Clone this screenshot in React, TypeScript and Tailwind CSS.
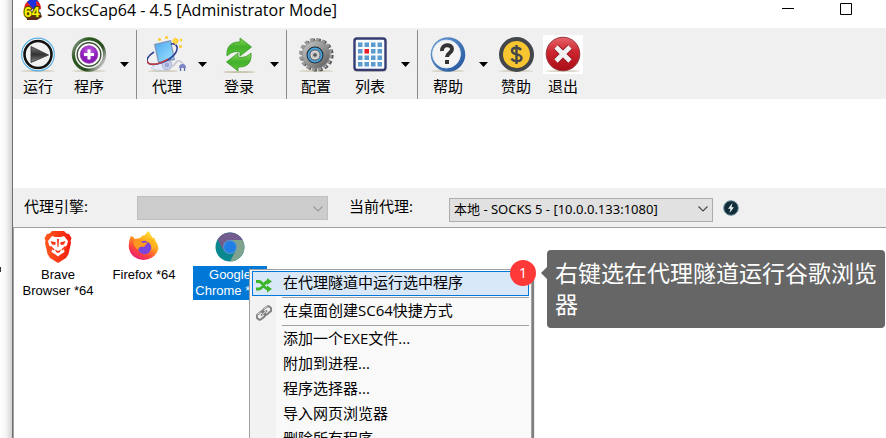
import type { ReactNode } from "react";

const cjk = "font-['Open_Sans','Noto_Sans_CJK_SC',sans-serif]";

function AppLogo() {
  return (
    <svg width="22" height="22" viewBox="0 0 22 22" aria-hidden="true">
      <path d="M5 2Q11-3 16 1L18 8 11 9Z" fill="#2030e0" stroke="#15157a" strokeWidth=".6" />
      <path d="M5 2Q1 6 3 10L11 9Z" fill="#e81c24" />
      <path d="M14 1q5 1 5 8l-4 1Z" fill="#f02020" />
      <path d="M3 12h15l2 5-5 3H5Z" fill="#5b2a1b" />
      <text x="2" y="17" fontSize="14" fontWeight="700" fontFamily="Liberation Sans, sans-serif" fill="#fff200" stroke="#4d4a00" strokeWidth="2" paintOrder="stroke">64</text>
    </svg>
  );
}

function Shadow() {
  return <ellipse cx="20" cy="37" rx="17" ry="1" fill="#c9c4ae" opacity=".7" />;
}

function Icon({ children }: { children: ReactNode }) {
  return (
    <svg width="40" height="40" viewBox="0 0 40 40" aria-hidden="true" className="shrink-0">
      {children}
    </svg>
  );
}

function RunIcon() {
  return (
    <Icon>
      <defs><linearGradient id="run" x1="0" y1="0" x2="0" y2="1"><stop stopColor="#777" /><stop offset=".5" stopColor="#333" /><stop offset="1" stopColor="#888" /></linearGradient></defs>
      <Shadow />
      <circle cx="20" cy="20.5" r="16.3" fill="#fff" stroke="#5ab0e2" strokeWidth="1.2" />
      <circle cx="20" cy="20.5" r="13.5" fill="#f1f1f1" stroke="#111" strokeWidth="2.6" />
      <path d="M13 12.500 30.500 21 13 28.500Z" fill="url(#run)" stroke="#333" strokeWidth=".8" />
    </Icon>
  );
}

function ProgramIcon() {
  return (
    <Icon>
      <defs>
        <linearGradient id="ring" x1="0" y1="0" x2="1" y2=".7"><stop stopColor="#aaa" /><stop offset=".3" stopColor="#2b5a20" /><stop offset=".75" stopColor="#2a4d20" /><stop offset="1" stopColor="#bbb" /></linearGradient>
        <radialGradient id="plus" cy=".3"><stop stopColor="#c45fe4" /><stop offset="1" stopColor="#8a1ab6" /></radialGradient>
      </defs>
      <Shadow />
      <circle cx="20" cy="20.5" r="15.6" fill="#f5f5f5" stroke="url(#ring)" strokeWidth="3.2" />
      <circle cx="20" cy="20.5" r="11.8" fill="#fff" stroke="#3b5034" strokeWidth="1.4" />
      <circle cx="20" cy="20.5" r="8.8" fill="url(#plus)" stroke="#8f3cad" strokeWidth=".8" />
      <path d="M20 15.500v10M15 20.500h10" stroke="#fff" strokeWidth="3" />
    </Icon>
  );
}

function ProxyIcon() {
  return (
    <Icon>
      <defs><linearGradient id="screen" x1="0" y1="0" x2="1" y2="1"><stop stopColor="#4fa9f0" /><stop offset="1" stopColor="#9be2ff" /></linearGradient></defs>
      <ellipse cx="16" cy="37" rx="15" ry="1" fill="#c9c4ae" opacity=".8" />
      <path d="M4 34q4-5 11-6l9-1v7q-8 4-15 2Z" fill="#e6eaf6" stroke="#bcc4e0" strokeWidth=".8" />
      <circle cx="20" cy="31" r="4.800" fill="#c5cdea" stroke="#a0aad2" strokeWidth=".8" />
      <circle cx="20" cy="31" r="2.200" fill="#9aa6d6" />
      <path d="m7 10 17-4 4 20-17 3Z" fill="#7d95b8" />
      <path d="m8.500 11 14.500-3.500 3.500 17L12 27.500Z" fill="url(#screen)" />
      <path d="M7 18C-4 25-1 32 10 30 23 27 31 19 30 13q-1-4-6-3" fill="none" stroke="#2d3f91" strokeWidth="1.600" />
      <path d="M0 27c2 6 14 3 21-2" fill="none" stroke="#d13b3d" strokeWidth="1.500" />
      <path d="M24 32c4 2 4-6 8-5q4 1 4 4" fill="none" stroke="#c5c8d0" strokeWidth="1.800" />
      <path d="M32 34q0-4 3.500-4t3.500 4Z" fill="#7a84c4" />
      <path d="M33.500 34v3M37.500 34v3" stroke="#5c67a8" strokeWidth="1.300" />
      <circle cx="28.500" cy="7" r="2.800" fill="#ffcb22" />
      <path d="M28.500 3v8M24.500 7h8" stroke="#ffda60" strokeWidth=".8" />
      <path d="M11 5.500h3M18 3.500h3M32 12.500h3M33 6h2" stroke="#fbcd35" strokeWidth="2.400" />
    </Icon>
  );
}

function LoginIcon() {
  return (
    <Icon>
      <defs><linearGradient id="green" x1="0" y1="0" x2="0" y2="1"><stop stopColor="#86da50" /><stop offset=".5" stopColor="#41b02c" /><stop offset="1" stopColor="#5cc636" /></linearGradient></defs>
      <ellipse cx="20" cy="38" rx="16" ry="1" fill="#c9c4ae" />
      <path d="M8 22C7 12 13 7.500 21 8V4l11.500 9L21 22v-4c-5-1-9 0-13 4Z" fill="url(#green)" stroke="#37962a" strokeWidth=".8" />
      <path d="M32 19c1 11-5 14.500-13 14v4L7.500 28 19 19v4c5 1 9 0 13-4Z" fill="url(#green)" stroke="#37962a" strokeWidth=".8" />
    </Icon>
  );
}

function GearIcon() {
  return (
    <Icon>
      <defs><linearGradient id="gear" x1="0" y1="0" x2="1" y2="1"><stop stopColor="#c9c9c9" /><stop offset=".6" stopColor="#8a8a8a" /><stop offset="1" stopColor="#555" /></linearGradient></defs>
      <Shadow />
      <circle cx="21" cy="21" r="14.800" fill="none" stroke="#555" strokeWidth="3.600" strokeDasharray="3.400 2.410" />
      <circle cx="19.500" cy="20.500" r="14.800" fill="none" stroke="#999" strokeWidth="3.500" strokeDasharray="3.400 2.410" />
      <circle cx="20" cy="20.500" r="13.800" fill="url(#gear)" stroke="#888" strokeWidth=".8" />
      <circle cx="19" cy="21" r="7.500" fill="#6b7680" stroke="#202a32" strokeWidth="2" />
      <circle cx="19" cy="21" r="6.700" fill="none" stroke="#43a8e7" strokeWidth="1.500" />
      <circle cx="19" cy="21" r="4" fill="#c4c4c4" stroke="#e2e2e2" />
      <circle cx="19" cy="21" r="1.800" fill="#555" />
    </Icon>
  );
}

const gridSteps = [8, 14.5, 21, 27.5];

function ListIcon() {
  return (
    <Icon>
      <Shadow />
      <rect x="4.500" y="4.500" width="31" height="31.500" rx="2.500" fill="#f8fafc" stroke="#343c73" strokeWidth="2.400" />
      {gridSteps.map((y, row) => gridSteps.map((x, column) => (
        <rect key={`${x}-${y}`} x={x} y={y + 0.5} width="4.500" height="4.500" fill={row === 1 && column === 1 ? "#ed1c24" : "#5b9bd0"} />
      )))}
    </Icon>
  );
}

function HelpIcon() {
  return (
    <Icon>
      <defs><linearGradient id="blue" x1="0" y1="0" x2="1" y2="1"><stop stopColor="#6f9fd6" /><stop offset="1" stopColor="#1f529b" /></linearGradient></defs>
      <Shadow />
      <circle cx="20" cy="20.500" r="17.300" fill="url(#blue)" />
      <circle cx="18.500" cy="20" r="14" fill="#f4f4f4" stroke="#dce7f5" />
      <path d="M14 17c-.5-7 10-7.500 10-2 0 4-5 4-5 8" fill="none" stroke="#333" strokeWidth="4" />
      <path d="M17 26h4v4h-4Z" fill="#333" />
    </Icon>
  );
}

function DonateIcon() {
  return (
    <Icon>
      <Shadow />
      <circle cx="20.500" cy="20.500" r="15.500" fill="#f6c52f" stroke="#43464b" strokeWidth="4" />
      <path d="M25 16c-2-3.200-9-3-9 .700 0 5 9.500 2.300 9.500 7.300 0 4-8 4.300-10 .500M20.500 11v19" fill="none" stroke="#43464b" strokeWidth="2.400" />
    </Icon>
  );
}

function ExitIcon() {
  return (
    <Icon>
      <defs><linearGradient id="red" x1="0" y1="0" x2="0" y2="1"><stop stopColor="#e66468" /><stop offset=".45" stopColor="#cc242e" /><stop offset="1" stopColor="#a90d17" /></linearGradient></defs>
      <path d="M0 1h40v39H0Z" fill="#fff" />
      <Shadow />
      <circle cx="20" cy="20" r="16.800" fill="url(#red)" stroke="#93343a" />
      <path d="m13 13 14 14M27 13 13 27" stroke="#8b1118" strokeWidth="6.600" />
      <path d="m13 13 14 14M27 13 13 27" stroke="#f1f1f1" strokeWidth="4.800" />
    </Icon>
  );
}

function Tool({ label, icon }: { label: string; icon: ReactNode }) {
  return (
    <button type="button" className="flex w-[46px] shrink-0 flex-col items-center text-[15px] leading-6">
      {icon}
      <span>{label}</span>
    </button>
  );
}

function SplitTool({ label, icon }: { label: string; icon: ReactNode }) {
  return (
    <div className="flex shrink-0 gap-[3px]">
      <Tool label={label} icon={icon} />
      <button type="button" aria-label={`${label} 更多`} className="flex w-[18px] justify-center pt-7">
        <svg width="9" height="5" viewBox="0 0 9 5" aria-hidden="true"><path d="M0 0h9L4.500 5Z" /></svg>
      </button>
    </div>
  );
}

function Divider() {
  return <div className="-mt-1 h-[69px] w-px shrink-0 bg-[#8c8c8c]" />;
}

function Chevron({ color }: { color: string }) {
  return (
    <svg width="10" height="6" viewBox="0 0 10 6" aria-hidden="true" className="pointer-events-none absolute top-[10px] right-[5px]">
      <path d="m.5.500 4.500 4.500 4.500-4.500" fill="none" stroke={color} strokeWidth="1.100" />
    </svg>
  );
}

function BraveIcon() {
  return (
    <svg width="32" height="32" viewBox="0 0 32 32" aria-hidden="true">
      <defs><linearGradient id="brave"><stop stopColor="#ff5a1f" /><stop offset="1" stopColor="#f51a0c" /></linearGradient></defs>
      <path d="M10 0h12l2.500 2.500 2.500.5 2.500 4-1 3 .5 2-2.500 11-2.500 4-8 5-8-5-2.500-4L3 12l.5-2-1-3L5 3l2.500-.5Z" fill="url(#brave)" />
      <path d="m10 5 3 1h6l3-1 4 5-1 4-3 4 .5 3-4 2.500-2.500 2-2.500-2-4-2.500.5-3-3-4-1-4Z" fill="#fff" />
      <path d="m8.500 10 5.500 1.500-1 2.500-3-.5Zm15 0L18 11.500l1 2.500 3-.5ZM15 8h2l-.5 8h-1ZM13 18.500l3 1.500 3-1.500-1 2.500-2 1-2-1Z" fill="#fb3414" />
      <path d="M8.500 15.500 12 19M23.500 15.500 20 19" stroke="#fb3414" strokeWidth="1.600" />
    </svg>
  );
}

function FirefoxIcon() {
  return (
    <svg width="32" height="32" viewBox="0 0 32 32" aria-hidden="true">
      <defs><linearGradient id="fox" x1=".8" y1="0" x2=".2" y2="1"><stop stopColor="#ffec36" /><stop offset=".4" stopColor="#ffa51c" /><stop offset=".7" stopColor="#ff473b" /><stop offset="1" stopColor="#e31587" /></linearGradient></defs>
      <path d="M3 5q2 0 4 3l5-1q2-3 5-3l-1 3q1-5 5-7 1 4 4 7 2-1 2 2 4 5 3 10a15 14 0 0 1-29-1Q0 10 3 5Z" fill="url(#fox)" />
      <circle cx="16.500" cy="16.500" r="6.700" fill="#7a45dc" />
      <path d="M6 10c4-1 7 0 9 2l5-1-4 5c-4-1-5 0-6 3-3-3-5-5-4-9Z" fill="#ff9821" />
      <path d="M18 10q7 2 6 9 4-4 2-9l-5-3Z" fill="#ffb51e" />
    </svg>
  );
}

function ChromeIcon() {
  return (
    <svg width="32" height="32" viewBox="0 0 32 32" aria-hidden="true">
      <circle cx="16" cy="16" r="14.500" fill="#0b8790" />
      <path d="M3.500 8.500A14.500 14.500 0 0 1 28.600 9H16L9.500 19Z" fill="#725c8d" />
      <path d="M28.600 9A14.500 14.500 0 0 1 16 30.500L22 19 16 9Z" fill="#81a38e" />
      <circle cx="16" cy="16" r="7" fill="#5f94cb" />
      <circle cx="16" cy="16" r="5.900" fill="#1f7fe6" />
    </svg>
  );
}

function Program({ icon, name, selected = false }: { icon: ReactNode; name: ReactNode; selected?: boolean }) {
  return (
    <button type="button" className="flex w-[86px] shrink-0 flex-col items-center gap-[3px] font-['Liberation_Sans',sans-serif] text-[13px] leading-4">
      {icon}
      <span className={selected ? "w-[74px] bg-[#0078d7] py-px text-white" : "w-full py-px"}>{name}</span>
    </button>
  );
}

function ShuffleIcon() {
  return (
    <svg width="16" height="16" viewBox="0 0 16 16" aria-hidden="true">
      <path d="M0 4.500h3c4 0 5 7.500 9 7.500M0 12h3c4 0 5-7.500 9-7.500" fill="none" stroke="#3db52a" strokeWidth="2.800" />
      <path d="m11 1 5 3.500L11 8Zm0 7.500 5 3.500-5 3.500Z" fill="#3db52a" />
    </svg>
  );
}

function LinkIcon() {
  return (
    <svg width="16" height="16" viewBox="0 0 16 16" aria-hidden="true">
      <g fill="none" transform="rotate(-40 8 8)">
        <rect x="-.5" y="5" width="9" height="6" rx="3" stroke="#808080" strokeWidth="2" />
        <rect x="7.500" y="5" width="9" height="6" rx="3" stroke="#808080" strokeWidth="2" />
        <path d="M4 8h8" stroke="#808080" strokeWidth="2" />
        <path d="M2 5h4M10 5h5M5 8h6" stroke="#ddd" strokeWidth=".9" />
      </g>
    </svg>
  );
}

function MenuItem({ label, icon, active = false }: { label: string; icon?: ReactNode; active?: boolean }) {
  return (
    <button type="button" role="menuitem" className={`flex h-[25px] w-full items-start border text-left text-[15px] leading-5 whitespace-nowrap ${active ? "border-[#0078d7] bg-[#d8e8f8]" : "border-transparent"}`}>
      <span className="flex w-[30px] shrink-0 pt-[5px] pl-[3px]">{icon}</span>
      <span>{label}</span>
    </button>
  );
}

function MenuDivider() {
  return <div role="separator" className="my-px ml-[30px] h-px bg-[#a0a0a0]" />;
}

const menuCommands = ["添加一个EXE文件...", "附加到进程...", "程序选择器...", "导入网页浏览器", "删除所有程序"];

export default function App() {
  return (
    <div className={`flex h-screen overflow-hidden bg-white text-black ${cjk}`}>
      <div className="flex w-[13px] shrink-0 items-center justify-start border-r border-[#707070] bg-linear-to-r from-white via-[#f5f5f5] to-[#d2d2d2]">
        <div className="mt-[100px] h-[5px] w-px bg-[#333]" />
      </div>
      <main className="flex min-w-0 flex-1 flex-col">
        <header className="flex h-7 shrink-0 items-start pl-[9px]">
          <AppLogo />
          <h1 className="ml-[3px] text-[16px] leading-5 whitespace-nowrap">SocksCap64 - 4.5 [Administrator Mode]</h1>
          <div className="ml-auto flex pr-[34px]">
            <button type="button" aria-label="最小化" className="flex h-[18px] w-[58px] items-center justify-start">
              <svg width="12" height="12" viewBox="0 0 12 12" aria-hidden="true"><path d="M0 5.500h12" stroke="#000" /></svg>
            </button>
            <button type="button" aria-label="最大化" className="flex h-[18px] items-center">
              <svg width="12" height="12" viewBox="0 0 12 12" aria-hidden="true"><path d="M.5.500h11v11H.5Z" fill="none" stroke="#000" /></svg>
            </button>
          </div>
        </header>

        <div role="toolbar" aria-label="工具栏" className="flex h-[71px] shrink-0 items-start bg-[#f0f0f0] pt-[6px] pl-[2px]">
          <div className="flex gap-[5px] pr-[3px]">
            <Tool label="运行" icon={<RunIcon />} />
            <SplitTool label="程序" icon={<ProgramIcon />} />
          </div>
          <Divider />
          <div className="flex gap-[5px] pr-[3px] pl-[7px]">
            <SplitTool label="代理" icon={<ProxyIcon />} />
            <SplitTool label="登录" icon={<LoginIcon />} />
          </div>
          <Divider />
          <div className="flex gap-2 pr-[3px] pl-[6px]">
            <Tool label="配置" icon={<GearIcon />} />
            <SplitTool label="列表" icon={<ListIcon />} />
          </div>
          <Divider />
          <div className="flex gap-px pl-[7px]">
            <SplitTool label="帮助" icon={<HelpIcon />} />
            <Tool label="赞助" icon={<DonateIcon />} />
            <Tool label="退出" icon={<ExitIcon />} />
          </div>
        </div>

        <div className="h-[89px] shrink-0" />

        <div className="flex h-10 shrink-0 items-center border-b border-[#a0a0a0] bg-[#f0f0f0] pl-[11px]">
          <label htmlFor="engine" className="w-[113px] shrink-0 pb-1 text-[15px] leading-5">代理引擎:</label>
          <div className="relative h-6 w-[191px] shrink-0">
            <select id="engine" disabled className="h-full w-full appearance-none border border-[#bfbfbf] bg-[#cccccc] opacity-100"><option></option></select>
            <Chevron color="#999" />
          </div>
          <label htmlFor="proxy" className="ml-[21px] w-[100px] shrink-0 pb-1 text-[15px] leading-5">当前代理:</label>
          <div className="relative h-6 w-[264px] shrink-0">
            <select id="proxy" className="h-full w-full appearance-none border border-[#adadad] bg-[#e1e1e1] px-1 pb-[2px] font-['Noto_Sans','Noto_Sans_CJK_SC',sans-serif] text-[13px] leading-5">
              <option>本地 - SOCKS 5 - [10.0.0.133:1080]</option>
            </select>
            <Chevron color="#444" />
          </div>
          <button type="button" aria-label="测试代理" className="ml-[10px]">
            <svg width="16" height="16" viewBox="0 0 16 16" aria-hidden="true">
              <circle cx="8" cy="8" r="7.300" fill="#122d38" stroke="#688f9d" />
              <path d="M9.500 3 5 8.800h2.500L6.500 13 11 7.200H8.500Z" fill="#e8f2f5" />
            </svg>
          </button>
        </div>

        <section aria-label="程序列表" className="relative flex-1 border-l border-[#a0a0a0] pt-[3px]">
          <div className="flex pl-px">
            <Program icon={<BraveIcon />} name={<>Brave<br />Browser *64</>} />
            <Program icon={<FirefoxIcon />} name="Firefox *64" />
            <Program icon={<ChromeIcon />} name={<span className="block whitespace-nowrap">Google<br />Chrome *64</span>} selected />
          </div>

          <div role="menu" className="absolute top-[41px] left-[235px] w-[283px] border border-[#a0a0a0] bg-linear-to-r from-[#f2f2f2] from-[26px] to-[#f9f9f9] to-[26px] px-[2px] pt-px shadow-[2px_2px_1px_#808080]">
            <MenuItem label="在代理隧道中运行选中程序" icon={<ShuffleIcon />} active />
            <MenuDivider />
            <MenuItem label="在桌面创建SC64快捷方式" icon={<LinkIcon />} />
            <MenuDivider />
            {menuCommands.map((label) => <MenuItem key={label} label={label} />)}
          </div>

          <div className="absolute top-8 left-[496px] flex size-[26px] items-center justify-center rounded-full bg-[#ff3838] pb-[2px] text-[15px] text-white">1</div>

          <div role="note" className="absolute top-[22px] left-[533px] w-[338px] rounded bg-[#666] px-2 py-2 text-[23px] leading-[31px] text-white">
            <div className="absolute top-[17px] -left-[6px] border-y-[6px] border-r-[6px] border-y-transparent border-r-[#666]" />
            右键选在代理隧道运行谷歌浏览器
          </div>
        </section>
      </main>
    </div>
  );
}
